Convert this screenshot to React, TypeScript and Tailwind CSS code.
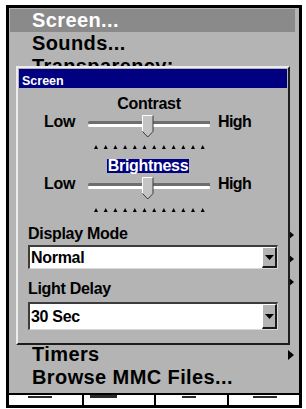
import React from "react";

const Arrow = () => (
  <svg width="6" height="10" viewBox="0 0 6 10" className="block">
    <polygon points="0,0 6,5 0,10" fill="#000" />
  </svg>
);

const Thumb = () => (
  <svg width="12" height="23" viewBox="0 0 12 23" className="block">
    <polygon points="0.5,0.5 11,0.5 11,16.5 5.75,22 0.5,16.5" fill="#c4c4c4" />
    <polyline points="0.5,16.5 0.5,0.5 11,0.5" fill="none" stroke="#ffffff" strokeWidth="1" />
    <polyline points="11,0.5 11,16.5 5.75,22 0.5,16.5" fill="none" stroke="#3a3a3a" strokeWidth="1" />
  </svg>
);

const Ticks = () => (
  <svg width="112" height="4" viewBox="0 0 112 4" className="block ml-[75px]">
    {Array.from({ length: 12 }).map((_, i) => {
      const x = 2 + i * 9.7;
      return <polygon key={i} points={`${x - 2},4 ${x + 2},4 ${x},0`} fill="#000" />;
    })}
  </svg>
);

const Slider = () => (
  <div className="flex h-[24px] items-start pl-[25px]">
    <span className="w-[44px] text-[16px] leading-[18px] tracking-[-0.3px]">Low</span>
    <div className="relative w-[122px] h-[24px]">
      <div className="absolute left-0 top-[8px] w-full h-[3px] bg-[#6e6e6e] rounded-l-full" />
      <div className="absolute left-0 top-[11px] w-full h-[3px] bg-white rounded-full" />
      <div className="absolute left-[54px] top-[2px]">
        <Thumb />
      </div>
    </div>
    <span className="ml-[8px] text-[16px] leading-[18px] tracking-[-0.6px]">High</span>
  </div>
);

const Dropdown = ({ value, h }: { value: string; h: string }) => (
  <div
    className={`ml-[9px] w-[250px] ${h} flex bg-white border-t-2 border-l-2 border-b border-r border-t-[#3c3c3c] border-l-[#3c3c3c] border-b-[#d8d8d8] border-r-[#d8d8d8]`}
  >
    <div className="flex-1 flex items-center pl-[1px] text-[16px] tracking-[-0.3px] text-black">{value}</div>
    <div className="w-[15px] h-full bg-[#b4b4b4] border-t border-l border-t-white border-l-white border-r-2 border-b-2 border-r-[#1a1a1a] border-b-[#1a1a1a] flex items-center justify-center">
      <svg width="9" height="5" viewBox="0 0 9 5" className="block">
        <polygon points="0,0 9,0 4.5,5" fill="#000" />
      </svg>
    </div>
  </div>
);

const MenuRow = ({
  label,
  h,
  arrow,
  highlight,
}: {
  label?: string;
  h: string;
  arrow?: boolean;
  highlight?: boolean;
}) => (
  <div
    className={`${h} flex items-center justify-between pl-[22px] pr-[1px] ${
      highlight ? "bg-[#8a8a8a] text-white" : "text-black"
    }`}
  >
    <span className="text-[20px] leading-[23px] tracking-[0.4px] whitespace-nowrap">{label}</span>
    {arrow ? <Arrow /> : null}
  </div>
);

export default function App() {
  return (
    <div className="w-[306px] h-[409px] bg-white overflow-hidden pt-[5px] pl-[6px] font-['Liberation_Sans',Arial,sans-serif] font-bold">
      <div className="relative w-[296px] h-[403px] border-[3px] border-black flex flex-col">
        {/* Menu */}
        <div className="h-[385px] bg-[#b4b4b4] pt-[1px] pl-[1px] pr-[4px] pb-[4px] flex flex-col">
          <MenuRow label="Screen..." h="h-[23px]" highlight />
          <MenuRow label="Sounds..." h="h-[23px]" />
          <MenuRow label="Transparency:" h="h-[23px]" />
          <div className="h-[145px]" />
          <MenuRow h="h-[24px]" arrow />
          <MenuRow h="h-[23px]" arrow />
          <MenuRow h="h-[24px]" arrow />
          <div className="h-[49px]" />
          <MenuRow label="Timers" h="h-[23px]" arrow />
          <MenuRow label="Browse MMC Files..." h="h-[23px]" />
        </div>
        {/* Bottom soft-key strip */}
        <div className="h-[12px] border-t-2 border-black bg-white grid grid-cols-4">
          <div className="relative">
            <div className="absolute left-[19px] top-[1px] w-[24px] h-[2px] bg-[#2a2a2a]" />
          </div>
          <div className="relative border-l-2 border-black">
            <div className="absolute left-[6px] top-0 w-[27px] h-[3px] bg-[#2a2a2a]" />
          </div>
          <div className="relative border-l-2 border-black">
            <div className="absolute left-[26px] top-[1px] w-[14px] h-[2px] bg-[#2a2a2a]" />
          </div>
          <div className="relative border-l-2 border-black">
            <div className="absolute left-[24px] top-[1px] w-[24px] h-[2px] bg-[#2a2a2a]" />
          </div>
        </div>

        {/* Dialog */}
        <div className="absolute left-[7px] top-[58px] w-[274px] h-[279px] bg-[#b4b4b4] border-t-2 border-l-2 border-t-[#ececec] border-l-[#ececec] border-r-2 border-b-2 border-r-[#1e1e1e] border-b-[#1e1e1e] p-[1px] flex flex-col">
          <div className="h-[19px] bg-[#000080] flex items-end pb-[1px] pl-[3px]">
            <span className="text-white text-[12.5px] leading-[12px]">Screen</span>
          </div>
          <div className="flex flex-col pt-[7px] text-black">
            <div className="ml-[69px] w-[122px] text-center text-[16px] leading-[18px] tracking-[-0.3px] whitespace-nowrap">
              Contrast
            </div>
            <Slider />
            <div className="mt-[8px]">
              <Ticks />
            </div>
            <div className="mt-[10px] ml-[88px] w-[82px] h-[14px] bg-[#000080] text-white text-center text-[16px] leading-[14px] tracking-[-0.3px] whitespace-nowrap">
              Brightness
            </div>
            <div className="mt-[2px]">
              <Slider />
            </div>
            <div className="mt-[9px]">
              <Ticks />
            </div>
            <div className="mt-[13px] ml-[9px] text-[16px] leading-[18px] tracking-[-0.3px]">Display Mode</div>
            <div className="mt-[2px]">
              <Dropdown value="Normal" h="h-[24px]" />
            </div>
            <div className="mt-[11px] ml-[9px] text-[16px] leading-[18px] tracking-[-0.3px]">Light Delay</div>
            <div className="mt-[4px]">
              <Dropdown value="30 Sec" h="h-[28px]" />
            </div>
          </div>
        </div>
      </div>
    </div>
  );
}
